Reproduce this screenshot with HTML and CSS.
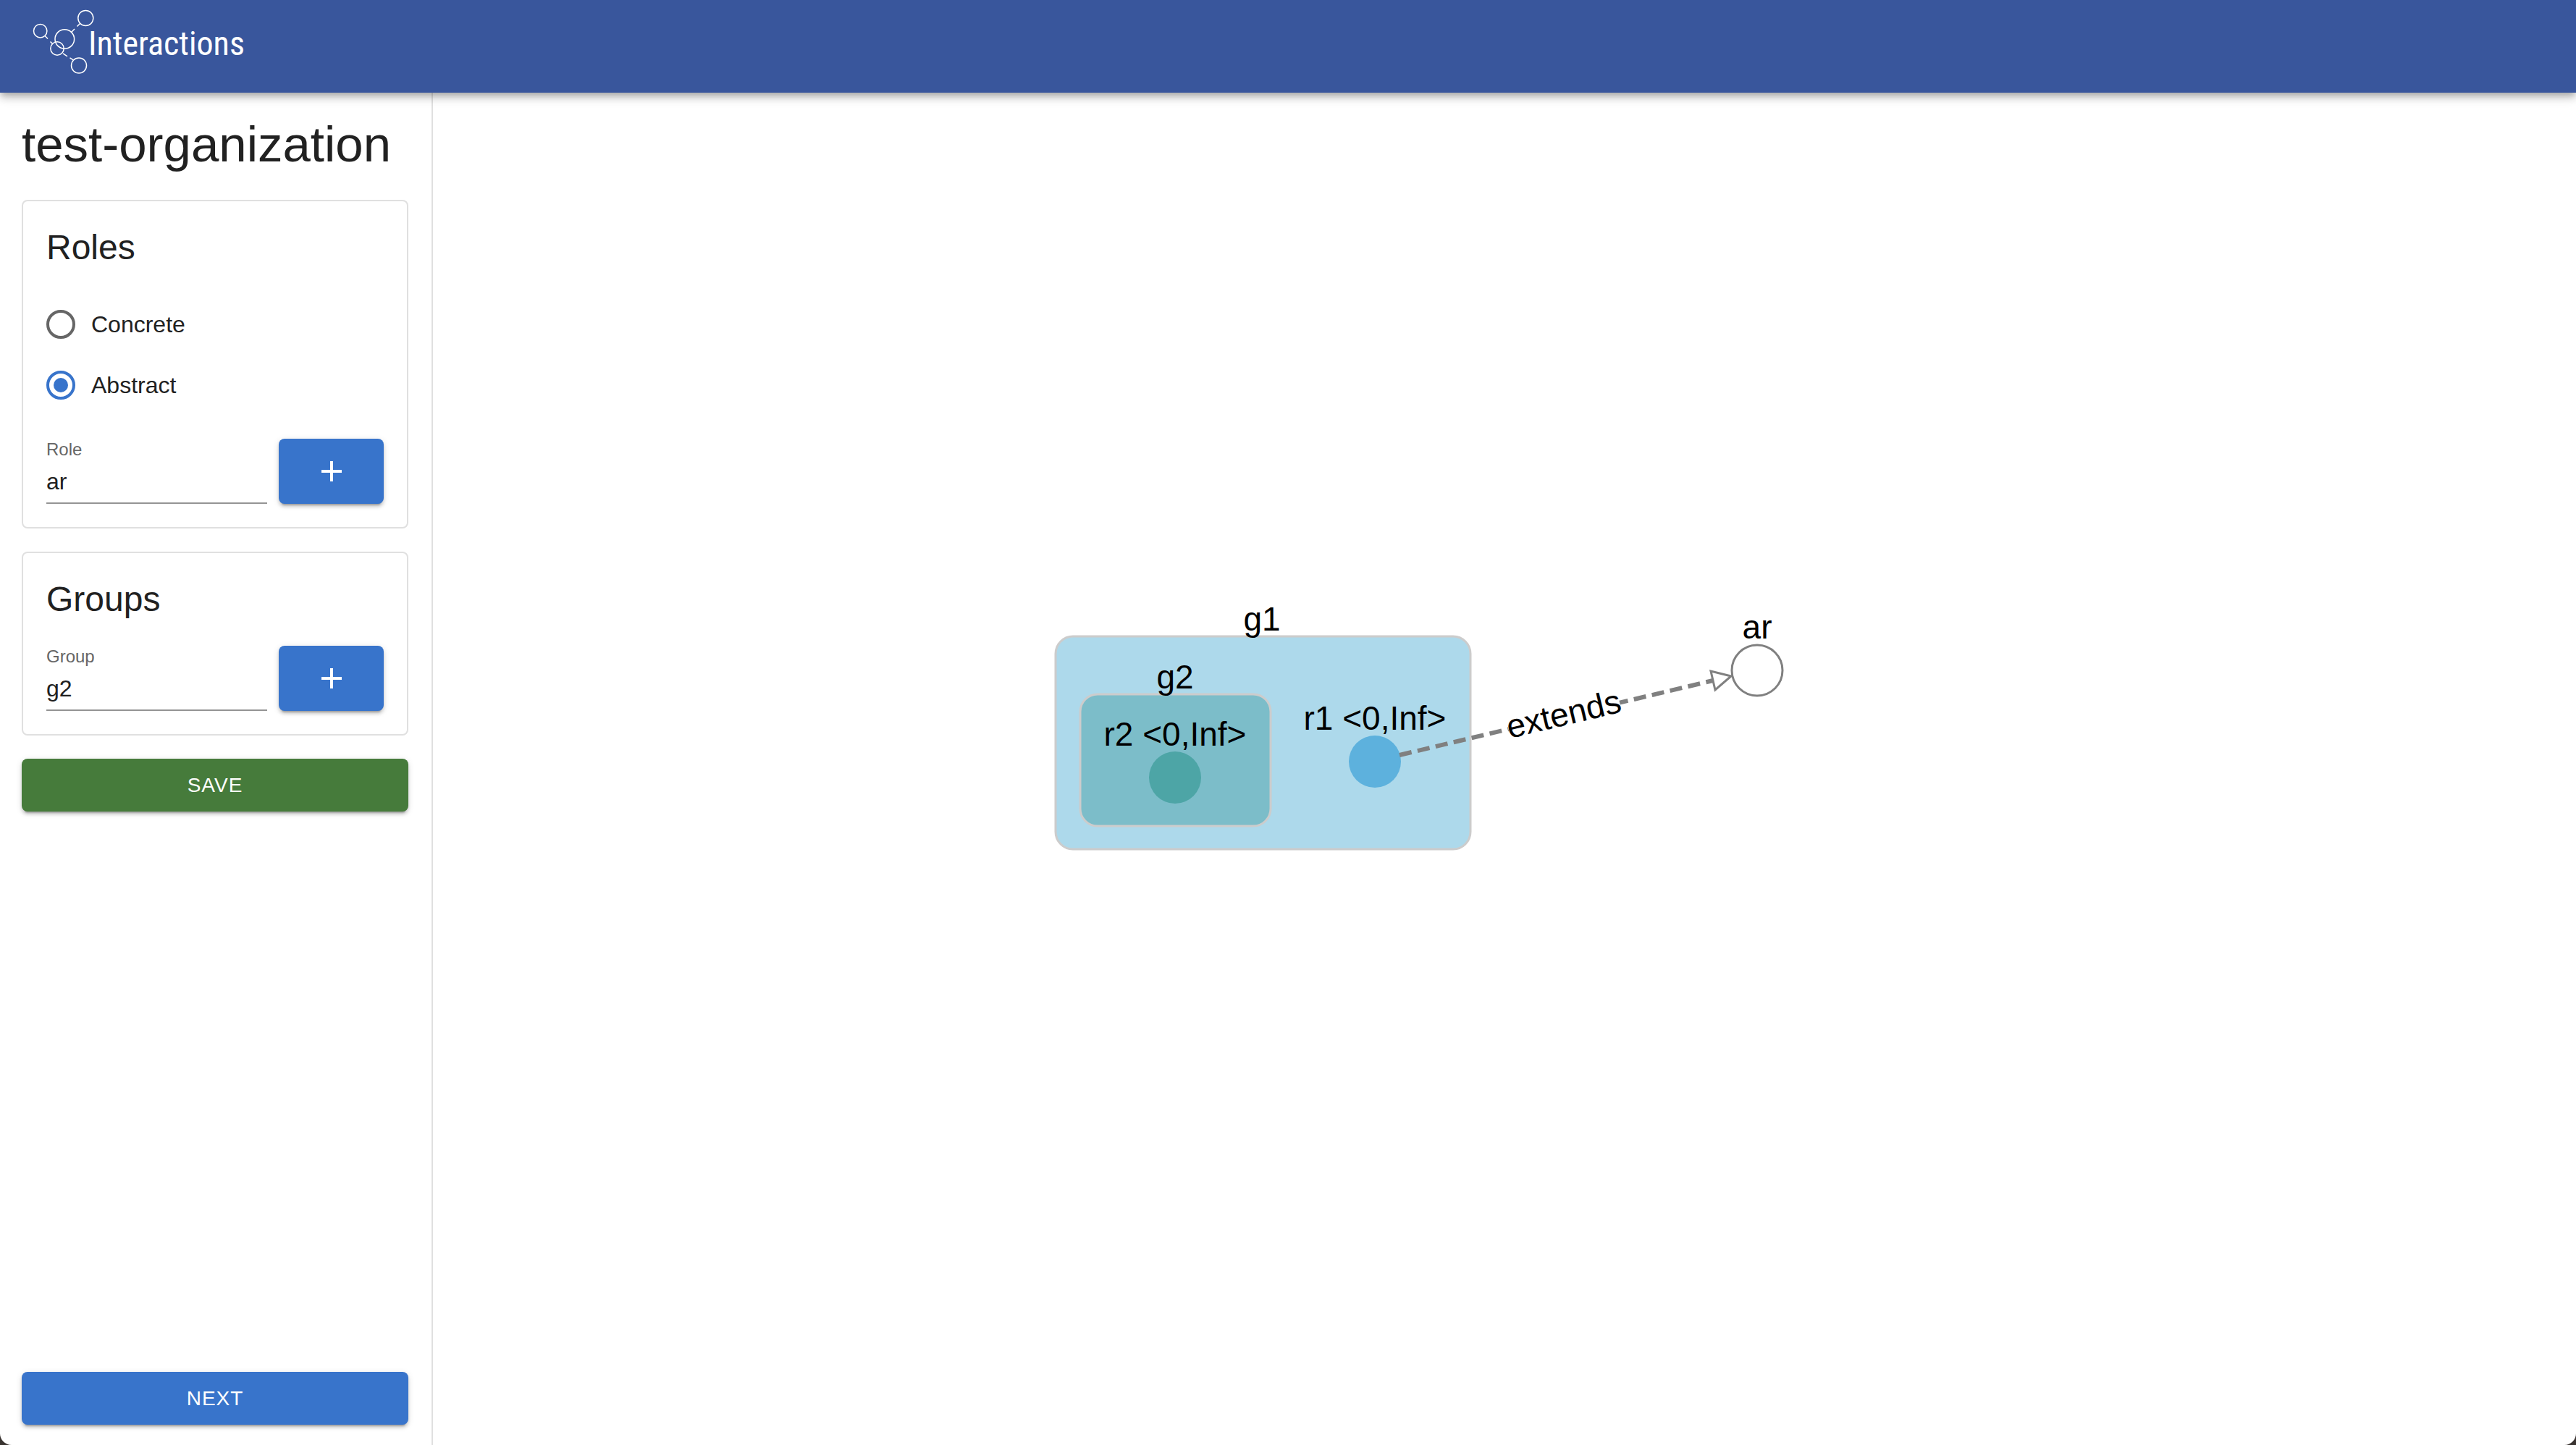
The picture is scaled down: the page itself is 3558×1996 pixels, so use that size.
FILE: index.html
```html
<!DOCTYPE html>
<html lang="en">
<head>
<meta charset="utf-8">
<title>Interactions</title>
<link rel="stylesheet" href="styles.css">
</head>
<body>
<header class="app-bar">
  <a class="brand" href="#">
    <svg class="brand-mark" viewBox="44 10 90 94" aria-hidden="true">
      <circle cx="55.7" cy="42.7" r="9.2"/>
      <circle cx="118.3" cy="25" r="10.5"/>
      <circle cx="89.3" cy="54" r="13.3"/>
      <circle cx="79" cy="67" r="9.2"/>
      <circle cx="109" cy="90.5" r="10.5"/>
      <path d="M62 49.5l4 4M69.5 57.5l3 3M98.5 44.5l4.500-4.500M106.500 36.500l4.500-4.500M87 73.800l6 4M96.500 79.800l5.500 3.500"/>
    </svg>
    <span class="brand-name">Interactions</span>
  </a>
</header>
<div class="workspace">
  <aside class="sidebar">
    <h1 class="page-title">test-organization</h1>
    <section class="card">
      <h2 class="card-title">Roles</h2>
      <div class="radio-group">
        <label class="radio"><input class="radio-input" type="radio" name="kind"><span>Concrete</span></label>
        <label class="radio"><input class="radio-input" type="radio" name="kind" checked><span>Abstract</span></label>
      </div>
      <div class="form-row">
        <div class="field">
          <label class="field-label" for="role">Role</label>
          <input class="field-input" id="role" type="text" value="ar">
        </div>
        <button class="button button-add" type="button" aria-label="Add role">
          <svg class="icon" viewBox="0 0 24 24" aria-hidden="true"><path d="M19 13h-6v6h-2v-6H5v-2h6V5h2v6h6v2z"/></svg>
        </button>
      </div>
    </section>
    <section class="card">
      <h2 class="card-title">Groups</h2>
      <div class="form-row">
        <div class="field">
          <label class="field-label" for="group">Group</label>
          <input class="field-input" id="group" type="text" value="g2">
        </div>
        <button class="button button-add" type="button" aria-label="Add group">
          <svg class="icon" viewBox="0 0 24 24" aria-hidden="true"><path d="M19 13h-6v6h-2v-6H5v-2h6V5h2v6h6v2z"/></svg>
        </button>
      </div>
    </section>
    <button class="button button-save" type="button">SAVE</button>
    <button class="button button-next" type="button">NEXT</button>
  </aside>
  <main class="canvas">
    <svg class="graph" viewBox="598 128 2960 1868" role="img" aria-label="Organization graph">
      <rect class="group group-outer" x="1458" y="879" width="573" height="294" rx="24"/>
      <rect class="group group-inner" x="1492" y="959" width="263" height="182" rx="24"/>
      <circle class="role-r2" cx="1623" cy="1074" r="36"/>
      <circle class="role-r1" cx="1899" cy="1052" r="36"/>
      <path class="edge" d="M1933 1043L2366 940"/>
      <path class="arrow" d="M2391 934L2363 927L2369 953Z"/>
      <circle class="role-abstract" cx="2427" cy="926" r="35"/>
      <g transform="translate(2160 988) rotate(-13.400)">
        <rect class="edge-label-back" x="-79" y="-23" width="158" height="46"/>
        <text class="graph-label" y="14">extends</text>
      </g>
      <text class="graph-label" x="1743" y="871">g1</text>
      <text class="graph-label" x="1623" y="951">g2</text>
      <text class="graph-label" x="1623" y="1030">r2 &lt;0,Inf&gt;</text>
      <text class="graph-label" x="1899" y="1008">r1 &lt;0,Inf&gt;</text>
      <text class="graph-label" x="2427" y="882">ar</text>
    </svg>
  </main>
</div>
</body>
</html>
```
FILE: styles.css
```css
* {
  box-sizing: border-box;
}

html {
  background: #3a3431;
}

body {
  margin: 0;
  min-height: 100vh;
  display: flex;
  flex-direction: column;
  border-radius: 0 0 16px 16px;
  background: #fff;
  color: #212121;
  font-family: "Liberation Sans", Arial, sans-serif;
  font-size: 32px;
}

/* App bar */
.app-bar {
  position: relative;
  height: 128px;
  padding: 10px 44px;
  background: #39569c;
  box-shadow: 0 4px 8px -2px rgba(0, 0, 0, 0.2), 0 8px 10px rgba(0, 0, 0, 0.14), 0 2px 20px rgba(0, 0, 0, 0.12);
}

.brand {
  display: inline-flex;
  color: #fff;
  text-decoration: none;
}

.brand-mark {
  width: 90px;
  height: 94px;
  margin-right: -12px;
  fill: none;
  stroke: #fff;
  stroke-width: 1.500;
}

.brand-name {
  padding-top: 22px;
  font-family: "Roboto Condensed", "Liberation Sans Narrow", Roboto, sans-serif;
  font-size: 46px;
  font-weight: 400;
  line-height: 56px;
}

/* Layout */
.workspace {
  flex: 1;
  display: flex;
}

.sidebar {
  flex: none;
  display: flex;
  flex-direction: column;
  gap: 32px;
  width: 598px;
  padding: 30px 32px 28px 30px;
  border-right: 2px solid #e0e0e0;
}

.page-title {
  margin: 0 0 2px;
  font-size: 69px;
  font-weight: 400;
  line-height: 84px;
}

.card {
  display: flex;
  flex-direction: column;
  gap: 32px;
  padding: 32px;
  border: 2px solid #e0e0e0;
  border-radius: 8px;
}

.card-title {
  margin: 0;
  font-size: 48px;
  font-weight: 400;
  line-height: 64px;
}

/* Radios */
.radio {
  display: flex;
  align-items: center;
  gap: 22px;
  height: 84px;
}

.radio-input {
  appearance: none;
  width: 40px;
  height: 40px;
  margin: 0;
  border: 4px solid #666;
  border-radius: 50%;
}

.radio-input:checked {
  padding: 6px;
  border-color: #3874cb;
  background: #3874cb content-box;
}

.radio-input:checked::before {
  content: "";
}

/* Text fields */
.form-row {
  display: flex;
  gap: 16px;
}

.field {
  flex: 1;
  display: flex;
  flex-direction: column;
  justify-content: space-between;
  min-width: 0;
  border-bottom: 2px solid #949494;
}

.field-label {
  color: #666;
  font-size: 24px;
  line-height: 30px;
}

.field-input {
  width: 100%;
  height: 56px;
  padding: 0 0 2px;
  border: 0;
  outline: 0;
  background: none;
  color: inherit;
  font: inherit;
}

/* Buttons */
.button {
  height: 73px;
  padding: 0;
  border: 0;
  border-radius: 8px;
  background: #3874cb;
  color: #fff;
  font: inherit;
  font-size: 28px;
  letter-spacing: 1px;
  box-shadow: 0 6px 2px -4px rgba(0, 0, 0, 0.2), 0 4px 4px rgba(0, 0, 0, 0.14), 0 2px 10px rgba(0, 0, 0, 0.12);
}

.button-add {
  display: flex;
  align-items: center;
  justify-content: center;
  width: 145px;
  height: 90px;
}

.button-save {
  background: #467b3b;
}

.button-next {
  margin-top: auto;
}

.icon {
  width: 48px;
  height: 48px;
  fill: currentColor;
}

/* Graph */
.canvas {
  flex: 1;
  min-width: 0;
  display: flex;
}

.graph {
  width: 100%;
}

.group {
  stroke: #ccc;
  stroke-width: 3;
}

.group-outer {
  fill: #add9eb;
}

.group-inner {
  fill: #7cbdc9;
}

.role-r1 {
  fill: #5db1dd;
}

.role-r2 {
  fill: #4da5a6;
}

.role-abstract,
.arrow {
  fill: #fff;
  stroke: #808080;
  stroke-width: 3;
}

.edge {
  stroke: #808080;
  stroke-width: 6;
  stroke-dasharray: 17.100 8.500;
}

.edge-label-back {
  fill: #fff;
}

.graph-label {
  fill: #000;
  font-size: 46px;
  text-anchor: middle;
}
```
